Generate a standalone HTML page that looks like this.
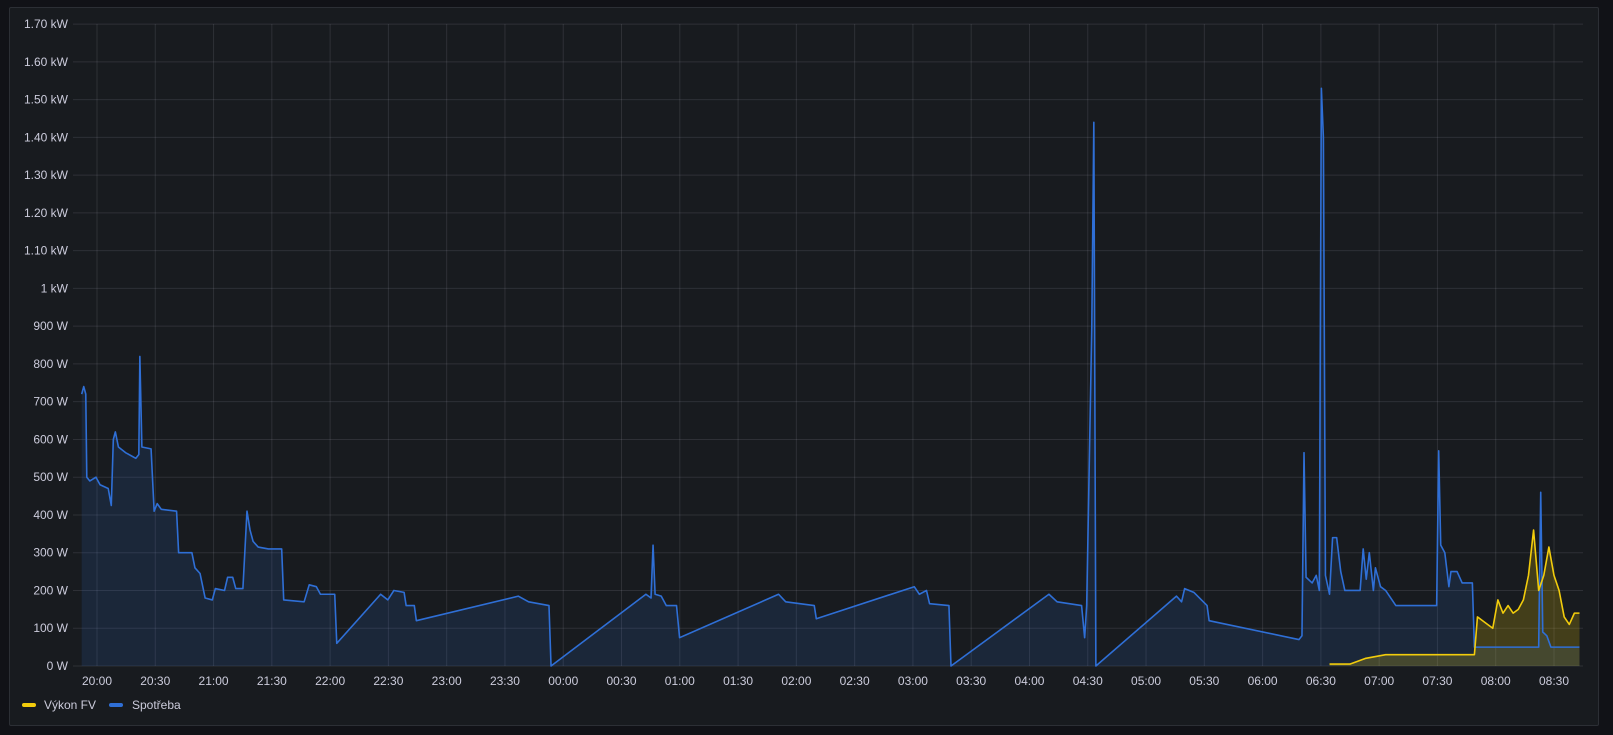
<!DOCTYPE html>
<html><head><meta charset="utf-8"><style>
html,body{margin:0;padding:0;background:#111217;width:1613px;height:735px;overflow:hidden;font-family:"Liberation Sans",sans-serif}
.panel{position:absolute;left:9px;top:7px;width:1590px;height:719px;background:#181b1f;border:1px solid #2c2f35;border-radius:2px;box-sizing:border-box}
svg{position:absolute;left:0;top:0}
text{font-family:"Liberation Sans",sans-serif;font-size:12px;fill:#ccccdc}
</style></head><body>
<div class="panel"></div>
<svg width="1613" height="735">
<g id="grid" stroke="rgba(204,204,220,0.12)" stroke-width="1"></g>
<g transform="translate(8.23,666) scale(1.0203,-0.3776)">
<polygon fill="rgba(50,116,217,0.14)" points="72,0 72,720 74,740 76,720 77,500 80,490 86,500 90,480 98,470 101,425 103,600 105,620 108,580 115,565 125,550 128,560 129,820 131,580 140,575 143,410 146,430 150,415 165,410 167,300 180,300 183,260 188,245 193,180 200,175 203,205 212,200 215,235 220,235 223,205 230,205 234,410 237,360 240,330 245,315 255,310 268,310 270,175 290,170 295,215 302,210 306,190 320,190 322,60 365,190 372,175 378,200 388,195 390,160 398,160 400,120 500,185 510,170 530,160 532,0 625,190 630,180 632,320 634,190 640,185 645,160 655,160 658,75 755,190 762,170 790,160 792,125 888,210 893,190 900,200 903,165 922,160 924,0 1020,190 1028,170 1052,160 1055,75 1057,160 1062,900 1064,1440 1066,0 1145,185 1150,170 1153,205 1162,195 1175,160 1177,120 1265,70 1268,80 1270,565 1272,235 1278,220 1282,240 1285,200 1287,1530 1289,1400 1291,240 1295,190 1298,340 1302,340 1306,250 1310,200 1325,200 1328,310 1331,230 1334,300 1338,200 1340,260 1345,210 1350,200 1360,160 1400,160 1402,570 1404,320 1408,300 1412,210 1414,250 1420,250 1425,220 1435,220 1437,50 1500,50 1502,460 1504,90 1508,80 1512,50 1540,50 1540,0"/>
<polygon fill="rgba(242,204,12,0.2)" points="1295,0 1295,5 1315,5 1330,20 1350,30 1380,30 1430,30 1437,30 1440,130 1450,110 1455,100 1460,175 1465,140 1470,160 1475,140 1480,150 1485,175 1490,240 1495,360 1500,200 1505,240 1510,315 1515,240 1520,200 1525,130 1530,110 1535,140 1540,140 1540,0"/>
<polyline fill="none" stroke="#2f6fd6" stroke-width="1.6" vector-effect="non-scaling-stroke" stroke-linejoin="round" points="72,720 74,740 76,720 77,500 80,490 86,500 90,480 98,470 101,425 103,600 105,620 108,580 115,565 125,550 128,560 129,820 131,580 140,575 143,410 146,430 150,415 165,410 167,300 180,300 183,260 188,245 193,180 200,175 203,205 212,200 215,235 220,235 223,205 230,205 234,410 237,360 240,330 245,315 255,310 268,310 270,175 290,170 295,215 302,210 306,190 320,190 322,60 365,190 372,175 378,200 388,195 390,160 398,160 400,120 500,185 510,170 530,160 532,0 625,190 630,180 632,320 634,190 640,185 645,160 655,160 658,75 755,190 762,170 790,160 792,125 888,210 893,190 900,200 903,165 922,160 924,0 1020,190 1028,170 1052,160 1055,75 1057,160 1062,900 1064,1440 1066,0 1145,185 1150,170 1153,205 1162,195 1175,160 1177,120 1265,70 1268,80 1270,565 1272,235 1278,220 1282,240 1285,200 1287,1530 1289,1400 1291,240 1295,190 1298,340 1302,340 1306,250 1310,200 1325,200 1328,310 1331,230 1334,300 1338,200 1340,260 1345,210 1350,200 1360,160 1400,160 1402,570 1404,320 1408,300 1412,210 1414,250 1420,250 1425,220 1435,220 1437,50 1500,50 1502,460 1504,90 1508,80 1512,50 1540,50"/>
<polyline fill="none" stroke="#f2cc0c" stroke-width="1.6" vector-effect="non-scaling-stroke" stroke-linejoin="round" points="1295,5 1315,5 1330,20 1350,30 1380,30 1430,30 1437,30 1440,130 1450,110 1455,100 1460,175 1465,140 1470,160 1475,140 1480,150 1485,175 1490,240 1495,360 1500,200 1505,240 1510,315 1515,240 1520,200 1525,130 1530,110 1535,140 1540,140"/>
</g>
<g id="ylab" text-anchor="end"></g>
<g id="xlab" text-anchor="middle"></g>
<rect x="22" y="703" width="14" height="4" rx="2" fill="#f2cc0c"/>
<text x="44" y="709">Výkon FV</text>
<rect x="109" y="703" width="14" height="4" rx="2" fill="#2f6fd6"/>
<text x="132" y="709">Spotřeba</text>
</svg>
<script>
var ns="http://www.w3.org/2000/svg",g=document.getElementById('grid'),yl=document.getElementById('ylab'),xl=document.getElementById('xlab');
var ylabels=["0 W","100 W","200 W","300 W","400 W","500 W","600 W","700 W","800 W","900 W","1 kW","1.10 kW","1.20 kW","1.30 kW","1.40 kW","1.50 kW","1.60 kW","1.70 kW"];
for(var i=0;i<18;i++){var y=666-i*37.76;
var l=document.createElementNS(ns,'line');l.setAttribute('x1',73);l.setAttribute('x2',1583);l.setAttribute('y1',y);l.setAttribute('y2',y);g.appendChild(l);
var t=document.createElementNS(ns,'text');t.setAttribute('x',68);t.setAttribute('y',y+4);t.textContent=ylabels[i];yl.appendChild(t);}
var times=["20:00","20:30","21:00","21:30","22:00","22:30","23:00","23:30","00:00","00:30","01:00","01:30","02:00","02:30","03:00","03:30","04:00","04:30","05:00","05:30","06:00","06:30","07:00","07:30","08:00","08:30"];
for(var j=0;j<26;j++){var x=97+j*58.28;
var l=document.createElementNS(ns,'line');l.setAttribute('x1',x);l.setAttribute('x2',x);l.setAttribute('y1',24);l.setAttribute('y2',666);g.appendChild(l);
var t=document.createElementNS(ns,'text');t.setAttribute('x',x);t.setAttribute('y',685);t.textContent=times[j];xl.appendChild(t);}
</script>
</body></html>
